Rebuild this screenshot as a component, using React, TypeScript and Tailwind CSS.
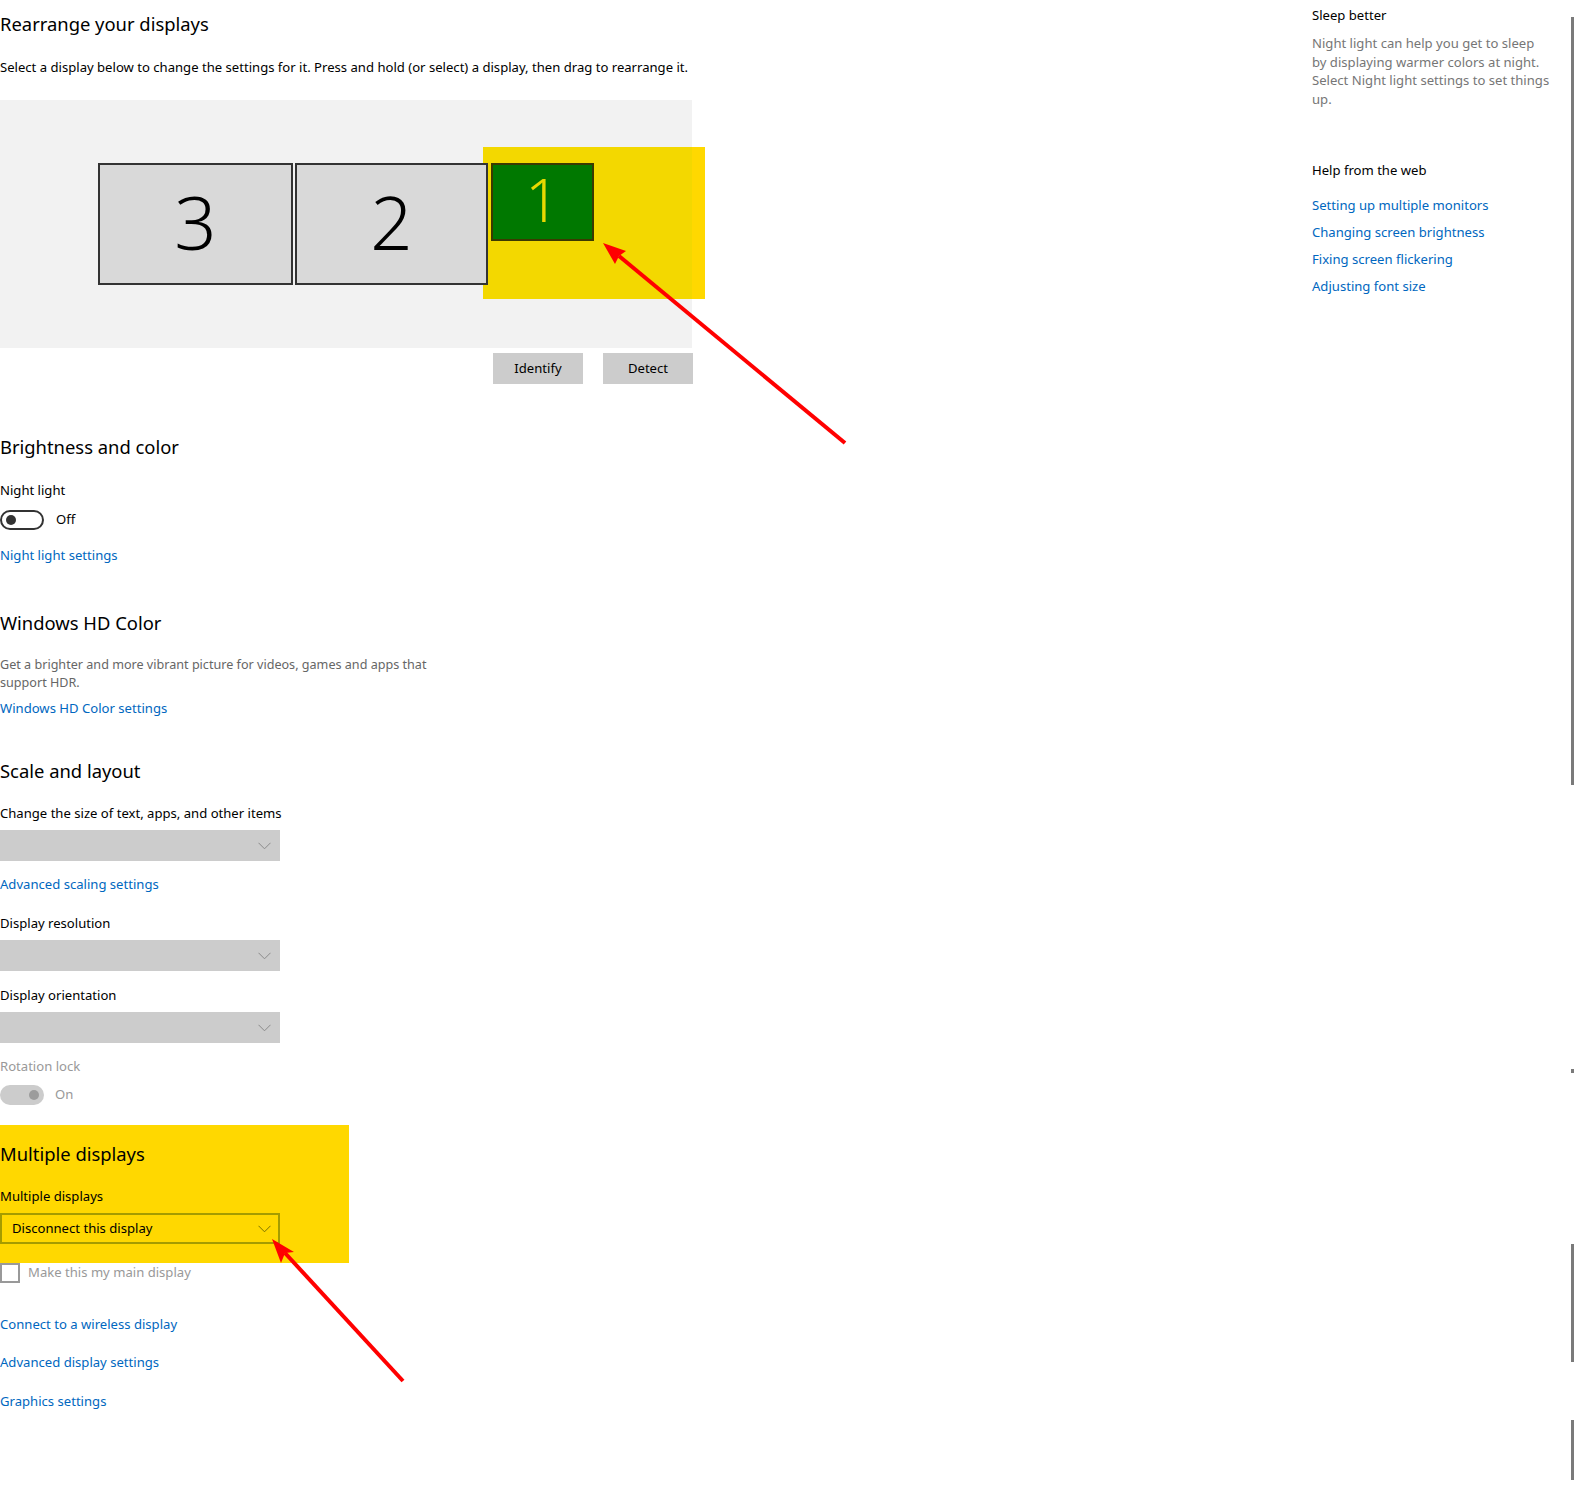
import type { ReactNode } from 'react';

const FONT = "font-['Noto_Sans',sans-serif]";

function Chevron({ color = '#8a8a8a' }: { color?: string }) {
  return (
    <svg width="13" height="8" viewBox="0 0 13 8" className="shrink-0">
      <path d="M0.5 0.8 L6.5 6.8 L12.5 0.8" fill="none" stroke={color} strokeWidth="1" />
    </svg>
  );
}

function Dropdown({ children }: { children?: ReactNode }) {
  return (
    <div className="mt-[7px] flex h-[31px] w-[280px] items-center justify-end bg-[#cccccc] pr-[9px]">
      {children}
      <Chevron />
    </div>
  );
}

function Link({ children, className = '' }: { children: ReactNode; className?: string }) {
  return <div className={`text-[13.1px] leading-[20px] text-[#0067c0] ${className}`}>{children}</div>;
}

function Monitor({ n, w }: { n: string; w: string }) {
  return (
    <div
      className={`flex h-[122px] ${w} items-center justify-center border-2 border-[#333333] bg-[#d9d9d9] text-[74px] font-light leading-none text-black`}
    >
      <span className="-mt-[4px]">{n}</span>
    </div>
  );
}

function Arrow({ tail, tip, w1, notch, w2 }: { tail: number[]; tip: number[]; w1: number[]; notch: number[]; w2: number[] }) {
  return (
    <g>
      <line x1={tail[0]} y1={tail[1]} x2={notch[0]} y2={notch[1]} stroke="#ff0000" strokeWidth="4" />
      <polygon points={`${tip.join(',')} ${w1.join(',')} ${notch.join(',')} ${w2.join(',')}`} fill="#ff0000" />
    </g>
  );
}

export default function App() {
  return (
    <div className={`relative h-[1488px] w-full overflow-hidden bg-white text-black ${FONT}`}>
      <div className="flex">
        {/* main column */}
        <main className="w-[705px] shrink-0">
          <h1 className="mt-[10px] text-[18.4px] leading-[28px]">Rearrange your displays</h1>
          <p className="mt-[19px] text-[13.1px] leading-[20px]">
            Select a display below to change the settings for it. Press and hold (or select) a display, then drag to rearrange it.
          </p>

          <div className="relative mt-[23px] h-[248px] w-[692px] bg-[#f2f2f2]">
            <div className="absolute left-[483px] top-[47px] flex h-[152px] w-[222px]">
              <div className="h-full flex-1 bg-[#f3d800]" />
              <div className="h-full w-[13px] bg-[#ffd800]" />
            </div>
            <div className="relative flex items-start gap-[2px] pl-[98px] pt-[63px]">
              <Monitor n="3" w="w-[195px]" />
              <Monitor n="2" w="w-[193px]" />
              <div className="ml-[1px] flex h-[78px] w-[103px] items-center justify-center border-2 border-[#3b3a00] bg-[#007800] text-[60px] font-light leading-none text-[#e8d800]">
                <span className="-mt-[6px]">1</span>
              </div>
            </div>
          </div>

          <div className="mt-[5px] flex w-[693px] justify-end gap-[20px]">
            <button className="h-[31px] w-[90px] bg-[#cccccc] text-[13.1px]">Identify</button>
            <button className="h-[31px] w-[90px] bg-[#cccccc] text-[13.1px]">Detect</button>
          </div>

          <h2 className="mt-[49px] text-[18.4px] leading-[28px]">Brightness and color</h2>
          <div className="mt-[19px] text-[13.1px] leading-[20px]">Night light</div>
          <div className="mt-[10px] flex h-[20px] items-center">
            <div className="flex h-[20px] w-[44px] items-center rounded-full border-2 border-[#333333] pl-[4px]">
              <div className="h-[10px] w-[10px] rounded-full bg-[#333333]" />
            </div>
            <span className="ml-[12px] text-[13.1px]">Off</span>
          </div>
          <Link className="mt-[15px]">Night light settings</Link>

          <h2 className="mt-[44px] text-[18.4px] leading-[28px]">Windows HD Color</h2>
          <p className="mt-[19px] w-[450px] text-[12.6px] leading-[18px] text-[#666666]">
            Get a brighter and more vibrant picture for videos, games and apps that support HDR.
          </p>
          <Link className="mt-[6px]">Windows HD Color settings</Link>

          <h2 className="mt-[39px] text-[18.4px] leading-[28px]">Scale and layout</h2>
          <div className="mt-[18px] text-[13.1px] leading-[20px]">Change the size of text, apps, and other items</div>
          <Dropdown />
          <Link className="mt-[13px]">Advanced scaling settings</Link>
          <div className="mt-[19px] text-[13.1px] leading-[20px]">Display resolution</div>
          <Dropdown />
          <div className="mt-[14px] text-[13.1px] leading-[20px]">Display orientation</div>
          <Dropdown />
          <div className="mt-[13px] text-[13.1px] leading-[20px] text-[#999999]">Rotation lock</div>
          <div className="mt-[9px] flex h-[20px] items-center">
            <div className="flex h-[20px] w-[44px] items-center justify-end rounded-full bg-[#cccccc] pr-[5px]">
              <div className="h-[10px] w-[10px] rounded-full bg-[#9c9c9c]" />
            </div>
            <span className="ml-[11px] text-[13.1px] text-[#999999]">On</span>
          </div>

          <section className="mt-[20px] h-[138px] w-[349px] bg-[#ffd800] pt-[15px]">
            <h2 className="text-[18.4px] leading-[28px]">Multiple displays</h2>
            <div className="mt-[18px] text-[13.1px] leading-[20px]">Multiple displays</div>
            <div className="mt-[7px] flex h-[31px] w-[280px] items-center justify-between border-2 border-[#a59c00] pl-[10px] pr-[7px] text-[13.1px]">
              <span>Disconnect this display</span>
              <Chevron color="#7a7200" />
            </div>
          </section>
          <div className="flex h-[20px] items-center">
            <div className="h-[20px] w-[20px] border-2 border-[#999999]" />
            <span className="ml-[8px] text-[13.1px] text-[#999999]">Make this my main display</span>
          </div>

          <Link className="mt-[31px]">Connect to a wireless display</Link>
          <Link className="mt-[18px]">Advanced display settings</Link>
          <Link className="mt-[19px]">Graphics settings</Link>
        </main>

        {/* related sidebar */}
        <aside className="ml-[607px] w-[250px] shrink-0">
          <div className="mt-[5px] text-[13.1px] leading-[20px]">Sleep better</div>
          <p className="mt-[9px] w-[237.5px] text-[13.1px] leading-[18.6px] text-[#767676]">
            Night light can help you get to sleep by displaying warmer colors at night. Select Night light settings to set things up.
          </p>
          <div className="mt-[52px] text-[13.1px] leading-[20px]">Help from the web</div>
          <div className="mt-[15px] flex flex-col gap-[7px]">
            <Link>Setting up multiple monitors</Link>
            <Link>Changing screen brightness</Link>
            <Link>Fixing screen flickering</Link>
            <Link>Adjusting font size</Link>
          </div>
        </aside>
      </div>

      {/* scrollbar remnants at right edge */}
      <div className="absolute left-[1571px] top-[17px] h-[768px] w-[3px] bg-[#7a7a7a]" />
      <div className="absolute left-[1571px] top-[1069px] h-[4px] w-[3px] bg-[#7a7a7a]" />
      <div className="absolute left-[1571px] top-[1244px] h-[118px] w-[3px] bg-[#7a7a7a]" />
      <div className="absolute left-[1571px] top-[1420px] h-[60px] w-[3px] bg-[#7a7a7a]" />

      {/* annotation arrows */}
      <svg className="pointer-events-none absolute left-0 top-0" width="1574" height="1488">
        <Arrow tail={[845, 443]} tip={[603, 243]} w1={[626, 251]} notch={[619, 256]} w2={[615, 264]} />
        <Arrow tail={[403, 1381]} tip={[272, 1239]} w1={[294, 1252]} notch={[285, 1253]} w2={[281, 1263]} />
      </svg>
    </div>
  );
}
